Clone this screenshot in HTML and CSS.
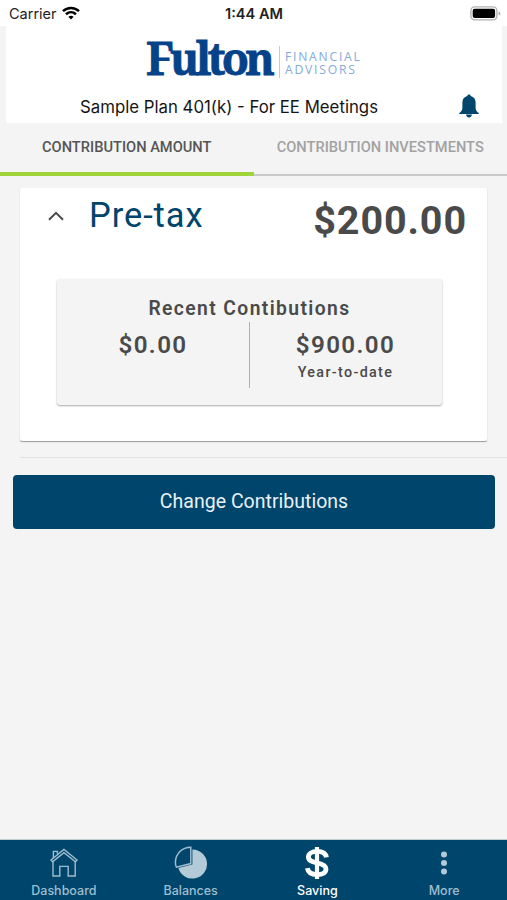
FILE: index.html
```html
<!DOCTYPE html>
<html lang="en">
<head>
    <meta charset="UTF-8">
    <meta name="viewport" content="width=device-width, initial-scale=1.0">
    <title>Contributions</title>

    <link rel="stylesheet" href="styles.css">
</head>
<body>
    <div class="statusBar">
        <div class="carrier">
            <span>Carrier</span>
            <svg width="18" height="14" viewBox="0 0 18 14" fill="none" stroke="#000" stroke-width="2.5">
                <path d="M1 5.2C5.5 0.9 12.5 0.9 17 5.2"/>
                <path d="M4 8.3C7 5.6 11 5.6 14 8.3"/>
                <path d="M6.4 10.7C8 9.4 10 9.4 11.6 10.7L9 13.4Z" fill="#000" stroke="none"/>
            </svg>
        </div>
        <span class="time">1:44 AM</span>
        <svg class="battery" width="31" height="15" viewBox="0 0 31 15">
            <rect x="0.9" y="0.9" width="26" height="13" rx="3.8" fill="#fff" stroke="#b2b2b2" stroke-width="1.4"/>
            <rect x="2.7" y="2.7" width="22.4" height="9.4" rx="2" fill="#000"/>
            <path d="M28.6 5.2Q30.4 6 30.4 7.4T28.6 9.6Z" fill="#a8a8a8"/>
        </svg>
    </div>

    <div class="header">
        <div class="logo">
            <span class="logoName">Fulton</span>
            <div class="logoSub">FINANCIAL<br>ADVISORS</div>
        </div>
        <div class="planRow">
            <span class="planName">Sample Plan 401(k) - For EE Meetings</span>
            <svg class="bell" width="20" height="24" viewBox="0 0 20 24" fill="#00456b">
                <path d="M10 0.4C11.1 0.4 11.6 1 11.7 2C15 2.8 16.6 5.2 16.6 8.6V13.5C16.6 16 17.7 17.6 19.8 19.2V19.9H0.2V19.2C2.3 17.6 3.4 16 3.4 13.5V8.6C3.4 5.2 5 2.8 8.3 2C8.4 1 8.9 0.4 10 0.4Z"/>
                <path d="M7.1 20.6H12.9C12.7 22.6 11.6 23.4 10 23.4S7.3 22.6 7.1 20.6Z"/>
            </svg>
        </div>
    </div>

    <div class="tabs">
        <div class="tab active">CONTRIBUTION AMOUNT</div>
        <div class="tab">CONTRIBUTION INVESTMENTS</div>
    </div>

    <div class="content">
        <div class="card">
            <div class="cardTop">
                <svg class="chevron" width="16" height="10" viewBox="0 0 16 10" fill="none" stroke="#4a4a4a" stroke-width="2">
                    <path d="M1 8.8L8 1.8L15 8.8"/>
                </svg>
                <span class="cardTitle">Pre-tax</span>
                <span class="cardAmount">$200.00</span>
            </div>
            <div class="recent">
                <div class="recentTitle">Recent Contibutions</div>
                <div class="recentCols">
                    <div class="col">
                        <span class="colAmount">$0.00</span>
                    </div>
                    <div class="col ytd">
                        <span class="colAmount">$900.00</span>
                        <span class="colLabel">Year-to-date</span>
                    </div>
                </div>
            </div>
        </div>
        <div class="line"></div>
        <div class="changeButton">Change Contributions</div>
    </div>

    <div class="nav">
        <div class="navItem">
            <svg width="28" height="32" viewBox="0 0 28 32" fill="none" stroke="#9dbdd0" stroke-width="1.4">
                <path d="M3.4 12V5.4H7.4V7.8"/>
                <path d="M14 3.4L1 14L2.6 15.8L14 6.6L25.4 15.8L27 14Z"/>
                <path d="M3 15.8V30H9.8V20.4H18.2V30H25.2V15.8"/>
            </svg>
            <span>Dashboard</span>
        </div>
        <div class="navItem">
            <svg width="34" height="34" viewBox="0 0 34 34">
                <path d="M18.4 3.4A14.6 14.6 0 1 1 4.4 22L18.4 18.4Z" fill="#b3cbd9"/>
                <path d="M16.8 1.2A15.2 15.2 0 0 0 1.4 16.4Q1.4 19 2.4 21.2L16.8 17.6Z" fill="#00456b" stroke="#9dbdd0" stroke-width="1.5"/>
            </svg>
            <span>Balances</span>
        </div>
        <div class="navItem selected">
            <svg width="26" height="34" viewBox="0 0 26 34" fill="none" stroke="#fff">
                <path d="M22.4 11.4C21.8 7.6 18.4 5.4 13.2 5.4C8 5.4 4.4 7.6 4.4 11C4.4 14.4 7.2 15.6 13 16.9C19 18.2 22 19.6 22 23C22 26.6 18.6 28.6 13.2 28.6C7.4 28.6 4 26.2 3.4 22.2" stroke-width="4.8"/>
                <path d="M13 1V33" stroke-width="4.2"/>
            </svg>
            <span>Saving</span>
        </div>
        <div class="navItem">
            <svg width="8" height="34" viewBox="0 0 8 34" fill="#b3cbd9">
                <circle cx="4" cy="8.5" r="3"/>
                <circle cx="4" cy="17" r="3"/>
                <circle cx="4" cy="25.6" r="3"/>
            </svg>
            <span>More</span>
        </div>
    </div>
</body>
</html>
```

FILE: styles.css
```css
html, body {
    margin: 0px;
    height: 100%;
}
body {
    display: flex;
    flex-direction: column;
    height: 900px;
    background-color: #f4f4f4;
    font-family: Roboto, sans-serif;
    overflow: hidden;
    white-space: nowrap;
}
svg {
    display: block;
    flex: none;
}

.statusBar {
    display: grid;
    grid-template-columns: 1fr auto 1fr;
    align-items: center;
    height: 26px;
    padding: 0px 6px 0px 9px;
    background-color: #fff;
    font-family: Inter, sans-serif;
    color: #222;
}
.carrier {
    display: flex;
    align-items: center;
    gap: 5px;
    font-size: 14.5px;
}
.time {
    padding: 1px 2px 0px 0px;
    font-size: 14.6px;
    font-weight: 600;
}
.battery {
    justify-self: end;
}

.header {
    height: 97px;
    margin: 0px 5px 0px 6px;
    background-color: #fff;
}
.logo {
    display: flex;
    padding: 10px 0px 0px 140px;
    height: 44px;
}
.logoName {
    width: 128px;
    font-family: "Noto Serif", "DejaVu Serif", serif;
    font-size: 44.5px;
    line-height: 44px;
    font-weight: bold;
    letter-spacing: -3.8px;
    color: #04428a;
    -webkit-text-stroke: 0.8px #04428a;
}
.logoSub {
    height: 28px;
    margin-top: 10px;
    margin-left: 5px;
    padding: 4px 0px 0px 5px;
    border-left: 1px solid #b9cde8;
    font-family: "Open Sans", sans-serif;
    font-size: 12.2px;
    line-height: 13px;
    font-weight: 500;
    letter-spacing: 1.75px;
    color: #85a9dc;
}
.planRow {
    display: flex;
    justify-content: space-between;
    align-items: center;
    height: 24px;
    padding: 15px 23px 0px 74px;
}
.planName {
    font-family: Inter, sans-serif;
    font-size: 16.8px;
    color: #151515;
}
.header .bell {
    margin-top: -2px;
}

.tabs {
    display: flex;
    height: 53px;
    font-size: 14.65px;
    font-weight: 500;
}
.tab {
    width: 50%;
    box-sizing: border-box;
    border-bottom: 2px solid #c9c9c9;
    line-height: 49px;
    text-align: center;
    color: #a2a2a2;
}
.tab.active {
    border-bottom: 4px solid #9fd43b;
    color: #555;
}

.content {
    flex: 1;
    padding-top: 12px;
}
.card {
    width: 467px;
    height: 253px;
    margin-left: 20px;
    background-color: #fff;
    border-radius: 2px;
    box-shadow: 0px 1px 1px #999;
}
.cardTop {
    display: flex;
    height: 91px;
    padding: 0px 20px 0px 28px;
}
.chevron {
    margin-top: 23px;
}
.cardTitle {
    margin-left: 25px;
    font-size: 34.5px;
    line-height: 55px;
    letter-spacing: 0.9px;
    color: #00456b;
}
.cardAmount {
    margin-left: auto;
    font-size: 39.5px;
    line-height: 65px;
    font-weight: bold;
    letter-spacing: 0.9px;
    color: #4a4a4a;
}
.recent {
    width: 385px;
    height: 126px;
    margin-left: 37px;
    background-color: #f4f4f4;
    border-radius: 3px;
    box-shadow: 0px 1px 2px #aaa;
    color: #4a4a4a;
    font-weight: 600;
}
.recentTitle {
    height: 43px;
    line-height: 59px;
    font-size: 19.3px;
    letter-spacing: 1.4px;
    text-align: center;
}
.recentCols {
    display: flex;
    height: 66px;
}
.col {
    display: flex;
    flex-direction: column;
    align-items: center;
    width: 192px;
    box-sizing: border-box;
}
.col.ytd {
    border-left: 1px solid #b0b0b0;
}
.colAmount {
    font-size: 24.2px;
    line-height: 46px;
    letter-spacing: 1.4px;
}
.colLabel {
    margin-top: -4px;
    font-size: 14.3px;
    line-height: 16px;
    font-weight: 500;
    letter-spacing: 1.35px;
}

.line {
    height: 1px;
    margin: 16px 0px 0px 20px;
    background-color: #e2e2e2;
}
.changeButton {
    width: 482px;
    height: 54px;
    margin: 17px 0px 0px 13px;
    background-color: #00456b;
    border-radius: 4px;
    color: #e9f1f6;
    font-size: 19.55px;
    line-height: 53px;
    text-align: center;
}

.nav {
    display: flex;
    height: 60px;
    background-color: #00456b;
    box-shadow: 0px -1px 0px #c4ccd0;
}
.navItem {
    display: flex;
    flex-direction: column;
    align-items: center;
    justify-content: space-between;
    width: 25%;
    height: 52px;
    padding: 6px 0px 0px 1px;
    box-sizing: content-box;
    color: #9dbdd0;
    font-family: Inter, sans-serif;
    font-size: 12.5px;
    line-height: 14px;
    font-weight: 500;
}
.navItem.selected {
    color: #fff;
}
```
